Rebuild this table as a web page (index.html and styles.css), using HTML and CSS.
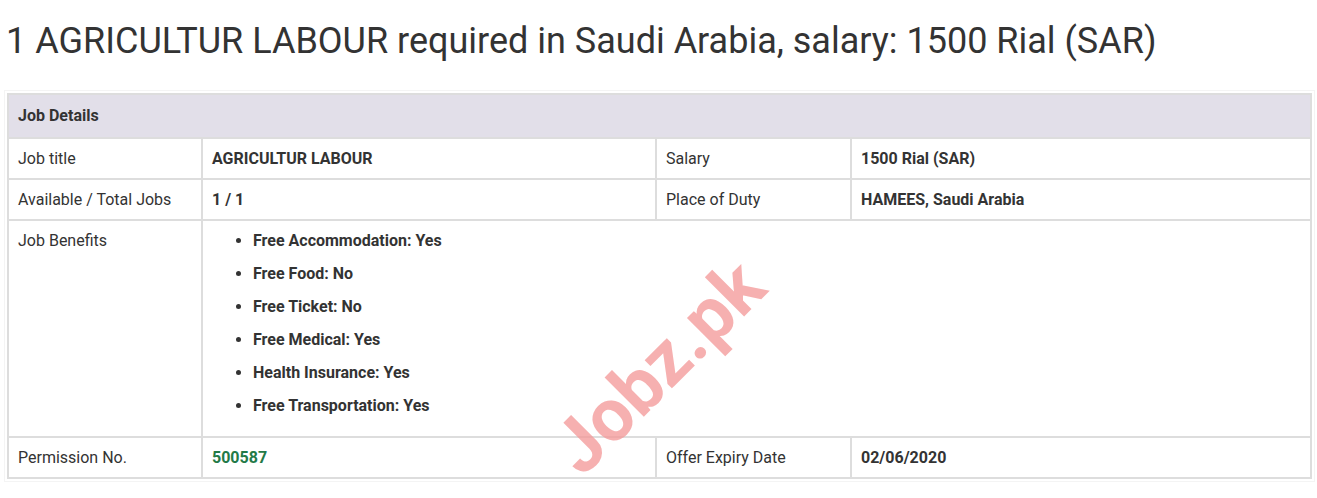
FILE: index.html
```html
<!DOCTYPE html>
<html lang="en">
<head>
<meta charset="utf-8">
<title>AGRICULTUR LABOUR required in Saudi Arabia</title>
<link rel="stylesheet" href="styles.css">
</head>
<body>
<div class="page">
  <h1 class="title">1 AGRICULTUR LABOUR required in Saudi Arabia, salary: 1500 Rial (SAR)</h1>
  <div class="panel">
    <div class="details">
      <div class="cell head">Job Details</div>

      <div class="cell">Job title</div>
      <div class="cell strong">AGRICULTUR LABOUR</div>
      <div class="cell">Salary</div>
      <div class="cell strong">1500 Rial (SAR)</div>

      <div class="cell">Available / Total Jobs</div>
      <div class="cell strong">1 / 1</div>
      <div class="cell">Place of Duty</div>
      <div class="cell strong">HAMEES, Saudi Arabia</div>

      <div class="cell">Job Benefits</div>
      <div class="cell benefits">
        <ul class="benefit-list">
          <li>Free Accommodation: Yes</li>
          <li>Free Food: No</li>
          <li>Free Ticket: No</li>
          <li>Free Medical: Yes</li>
          <li>Health Insurance: Yes</li>
          <li>Free Transportation: Yes</li>
        </ul>
      </div>

      <div class="cell">Permission No.</div>
      <div class="cell strong green">500587</div>
      <div class="cell">Offer Expiry Date</div>
      <div class="cell strong">02/06/2020</div>
    </div>
    <span class="watermark">Jobz.pk</span>
  </div>
</div>
</body>
</html>
```
FILE: styles.css
```css
html, body {
  margin: 0;
  padding: 0;
  background: #ffffff;
}

body {
  font-family: Roboto, "Liberation Sans", Arial, sans-serif;
  color: #333333;
}

.page {
  padding: 21px 0 0 4px;
}

.title {
  margin: 0 0 29px 2px;
  font-size: 36px;
  line-height: 40px;
  font-weight: 400;
  color: #333333;
}

.panel {
  position: relative;
  width: 1305px;
  padding: 2px;
  border: 1px solid #f4f4f4;
}

.details {
  display: grid;
  grid-template-columns: 192px 452px 193px 458px;
  grid-template-rows: 42px 39px 39px 215px 39px;
  gap: 2px;
  background: #dddddd;
  border: 2px solid #dddddd;
}

.cell {
  background: #ffffff;
  padding: 9px 9px;
  font-size: 16px;
  line-height: 21px;
  color: #333333;
}

.head {
  grid-column: 1 / -1;
  background: #e2dfe9;
  padding: 10px 9px;
  line-height: 22px;
  font-weight: 700;
}

.strong {
  font-weight: 700;
}

.green {
  color: #237a47;
}

.benefits {
  grid-column: 2 / -1;
  padding-left: 9px;
}

.benefit-list {
  margin: 0;
  padding: 0 0 0 41px;
  font-weight: 700;
}

.benefit-list li {
  line-height: 21px;
}

.benefit-list li + li {
  margin-top: 12px;
}

.watermark {
  position: absolute;
  left: 653px;
  top: 276px;
  transform: translate(-50%, -50%) rotate(-45deg);
  font-size: 74px;
  line-height: 1;
  font-weight: 700;
  color: rgba(243, 150, 150, 0.75);
  white-space: nowrap;
  pointer-events: none;
}
```
